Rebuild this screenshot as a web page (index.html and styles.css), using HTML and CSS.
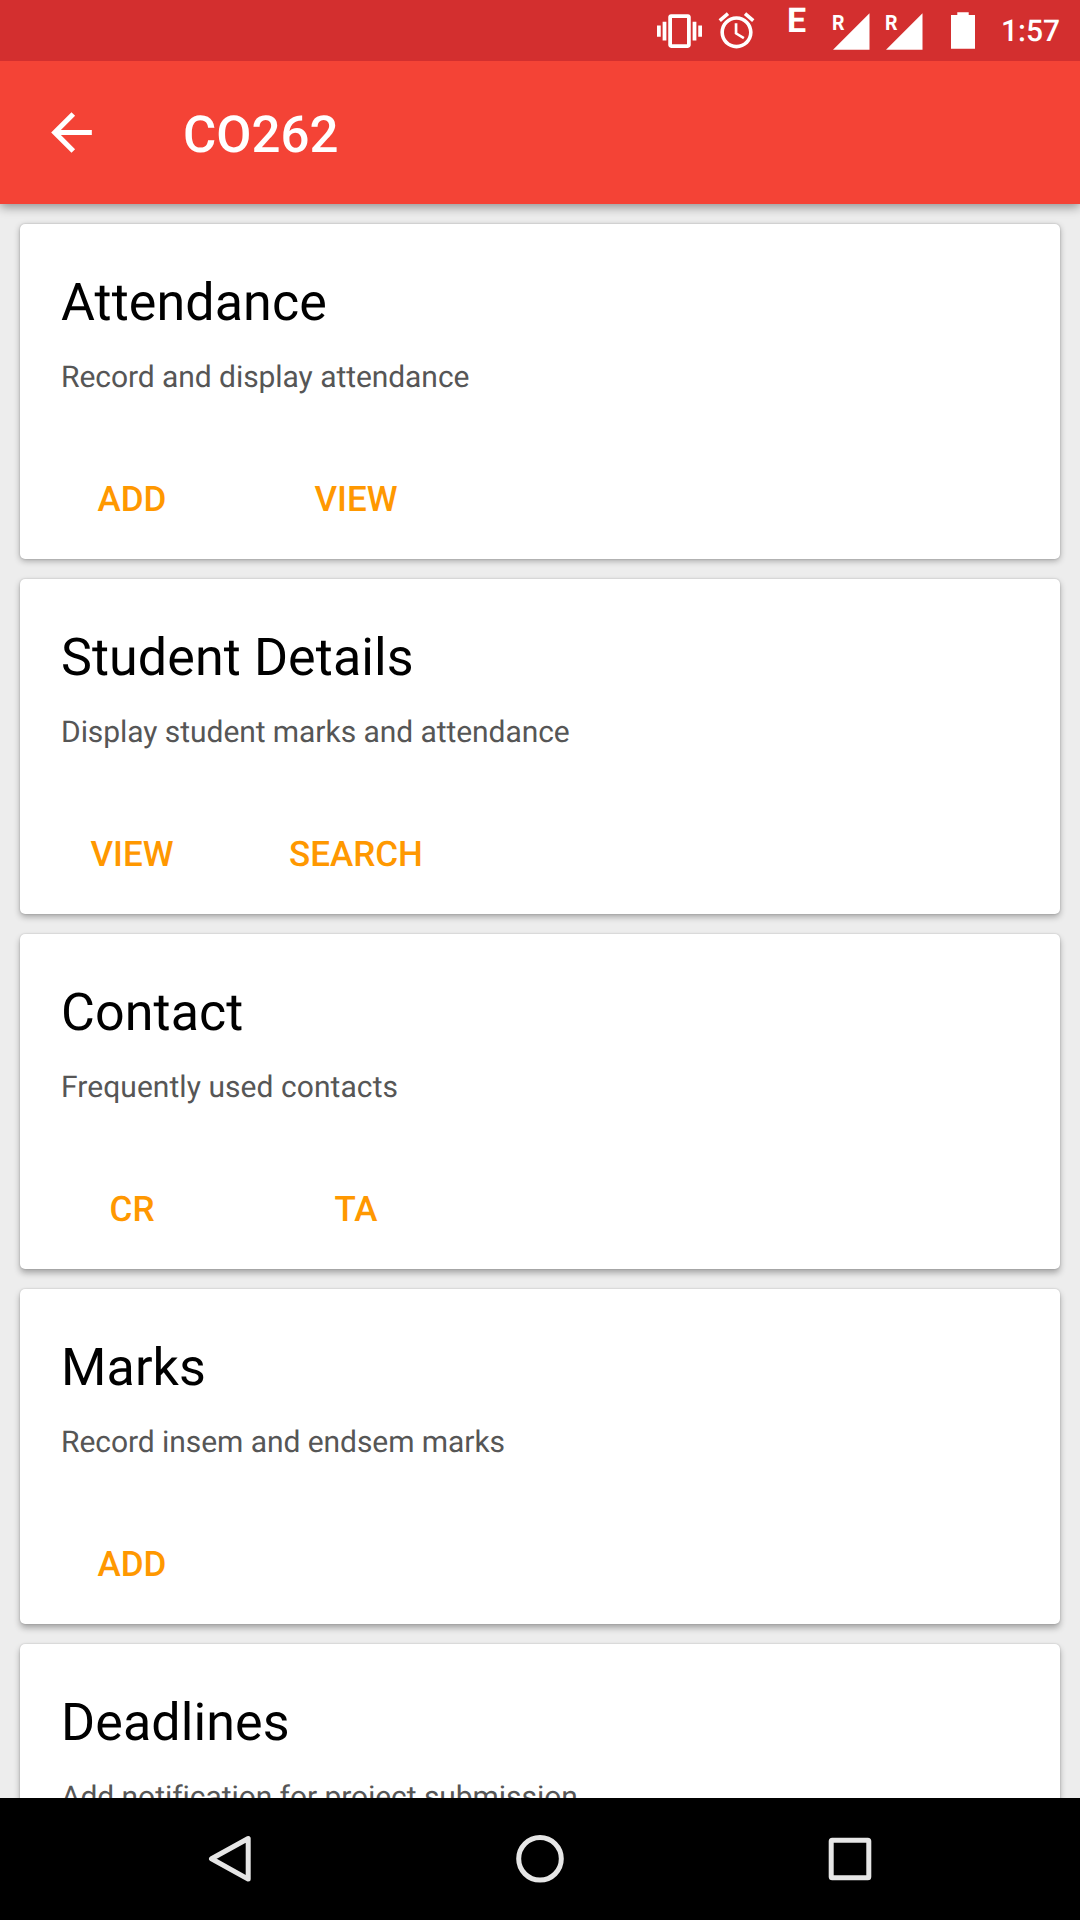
FILE: index.html
```html
<!DOCTYPE html>
<html lang="en">
<head>
<meta charset="utf-8">
<title>CO262</title>
<link rel="stylesheet" href="styles.css">
</head>
<body>
<div class="screen">
  <div class="status-bar">
    <svg class="icon-vibrate" viewBox="0 0 24 24"><path d="M0 15h2V9H0v6zm3 2h2V7H3v10zm19-8v6h2V9h-2zm-3 8h2V7h-2v10zM16.5 3h-9C6.67 3 6 3.67 6 4.5v15c0 .83.67 1.5 1.5 1.5h9c.83 0 1.5-.67 1.5-1.5v-15c0-.83-.67-1.5-1.5-1.5zM16 19H8V5h8v14z"/></svg>
    <svg class="icon-alarm" viewBox="0 0 24 24"><path d="M22 5.72l-4.6-3.86-1.29 1.53 4.6 3.86L22 5.72zM7.88 3.39L6.6 1.86 2 5.71l1.29 1.53 4.59-3.85zM12.5 8H11v6l4.75 2.85.75-1.23-4-2.37V8zM12 4c-4.97 0-9 4.03-9 9s4.02 9 9 9c4.97 0 9-4.03 9-9s-4.03-9-9-9zm0 16c-3.87 0-7-3.13-7-7s3.13-7 7-7 7 3.13 7 7-3.13 7-7 7z"/></svg>
    <span class="network">E</span>
    <svg class="icon-signal" viewBox="0 0 37 61"><path d="M0 49.7 36.5 13.2V49.7z"/><text class="roaming" x="-1" y="30" textLength="12.5" lengthAdjust="spacingAndGlyphs">R</text></svg>
    <svg class="icon-signal" viewBox="0 0 37 61"><path d="M0 49.7 36.5 13.2V49.7z"/><text class="roaming" x="-1" y="30" textLength="12.5" lengthAdjust="spacingAndGlyphs">R</text></svg>
    <svg class="icon-battery" viewBox="0 0 24 61"><path d="M0 15h6.3v-2.8h11.4V15H24v33.7H0z"/></svg>
    <span class="clock">1:57</span>
  </div>

  <header class="app-bar">
    <svg class="icon-back" viewBox="0 0 24 24"><path d="M20 11H7.83l5.59-5.59L12 4l-8 8 8 8 1.41-1.41L7.83 13H20v-2z"/></svg>
    <h1 class="app-title">CO262</h1>
  </header>

  <main class="cards">
    <section class="card">
      <h2 class="card-title">Attendance</h2>
      <p class="card-text">Record and display attendance</p>
      <div class="actions"><button class="action">ADD</button><button class="action">VIEW</button></div>
    </section>
    <section class="card">
      <h2 class="card-title">Student Details</h2>
      <p class="card-text">Display student marks and attendance</p>
      <div class="actions"><button class="action">VIEW</button><button class="action">SEARCH</button></div>
    </section>
    <section class="card card-contact">
      <h2 class="card-title">Contact</h2>
      <p class="card-text">Frequently used contacts</p>
      <div class="actions"><button class="action">CR</button><button class="action">TA</button></div>
    </section>
    <section class="card">
      <h2 class="card-title">Marks</h2>
      <p class="card-text">Record insem and endsem marks</p>
      <div class="actions"><button class="action">ADD</button></div>
    </section>
    <section class="card">
      <h2 class="card-title">Deadlines</h2>
      <p class="card-text">Add notification for project submission</p>
    </section>
  </main>

  <nav class="nav-bar">
    <svg class="nav-icon" viewBox="0 0 60 60"><path d="M48.2 9.5V50.1L11.5 29.8z"/></svg>
    <svg class="nav-icon" viewBox="0 0 60 60"><circle cx="30" cy="29.8" r="21.3"/></svg>
    <svg class="nav-icon" viewBox="0 0 60 60"><rect x="11.2" y="11.2" width="37.6" height="37.6" rx="1"/></svg>
  </nav>
</div>
</body>
</html>
```

FILE: styles.css
```css
* { box-sizing: border-box; }

body {
  margin: 0;
  font-family: Roboto, sans-serif;
  text-rendering: geometricPrecision;
}

.screen {
  display: flex;
  flex-direction: column;
  width: 1080px;
  height: 1920px;
  overflow: hidden;
  background: #ededed;
}

.status-bar {
  position: relative;
  z-index: 2;
  flex: none;
  display: flex;
  align-items: center;
  justify-content: flex-end;
  height: 61px;
  padding-right: 20px;
  background: #d32f2f;
  color: #fff;
  fill: #fff;
}

.icon-vibrate { width: 45px; height: 46px; margin-right: 13px; }
.icon-alarm { width: 43px; height: 43px; margin-right: 29px; }

.network {
  width: 23px;
  height: 61px;
  margin-right: 23px;
  font-size: 34px;
  font-weight: 700;
  line-height: 43px;
}

.icon-signal { width: 37px; height: 61px; margin-right: 16px; overflow: visible; }
.icon-signal + .icon-battery { margin-left: 12px; }
.roaming { font-size: 21px; font-weight: 700; }
.icon-battery { width: 24px; height: 61px; margin-right: 26px; }

.clock {
  padding-top: 2px;
  font-size: 30px;
  font-weight: 500;
  line-height: 61px;
}

.app-bar {
  position: relative;
  z-index: 1;
  flex: none;
  display: flex;
  align-items: center;
  height: 143px;
  padding-left: 41px;
  gap: 81px;
  background: #f44336;
  box-shadow: 0 3px 10px rgba(0, 0, 0, .4);
}

.icon-back { width: 61px; height: 61px; fill: #fff; }

.app-title {
  margin: 0;
  padding-top: 6px;
  color: #fff;
  font-size: 51px;
  font-weight: 500;
  line-height: 60px;
}

.cards {
  flex: 1;
  min-height: 0;
  display: flex;
  flex-direction: column;
  gap: 20px;
  padding: 20px 20px 0;
  overflow: hidden;
}

.card {
  --drop: 3px;
  flex: none;
  height: 335px;
  padding: 49px 41px 0;
  border-radius: 5px;
  background: #fff;
  box-shadow: 0 var(--drop) 6px rgba(0, 0, 0, .3), 0 0 2px rgba(0, 0, 0, .2);
}

.card:nth-child(1) { --drop: 2px; }
.card:nth-child(n + 3) { --drop: 4px; }

.card-title {
  margin: 0;
  color: #000;
  font-size: 52px;
  font-weight: 400;
  line-height: 60px;
  letter-spacing: .1px;
}

.card-text {
  margin: 27px 0 0;
  color: #565656;
  font-size: 30px;
  line-height: 36px;
  letter-spacing: -.06px;
}

.card-contact .card-text { letter-spacing: .06px; }

.actions {
  display: flex;
  margin: 53px -41px 0;
}

.action {
  width: 224px;
  height: 100px;
  padding: 0;
  border: 0;
  background: none;
  color: #ff9800;
  font-family: inherit;
  font-size: 35px;
  font-weight: 500;
  text-rendering: inherit;
}

.nav-bar {
  position: relative;
  flex: none;
  display: flex;
  align-items: center;
  justify-content: center;
  gap: 250px;
  height: 122px;
  background: #000;
}

.nav-icon {
  width: 60px;
  height: 60px;
  fill: none;
  stroke: #e6e6e6;
  stroke-width: 5;
  stroke-linejoin: round;
}
```
